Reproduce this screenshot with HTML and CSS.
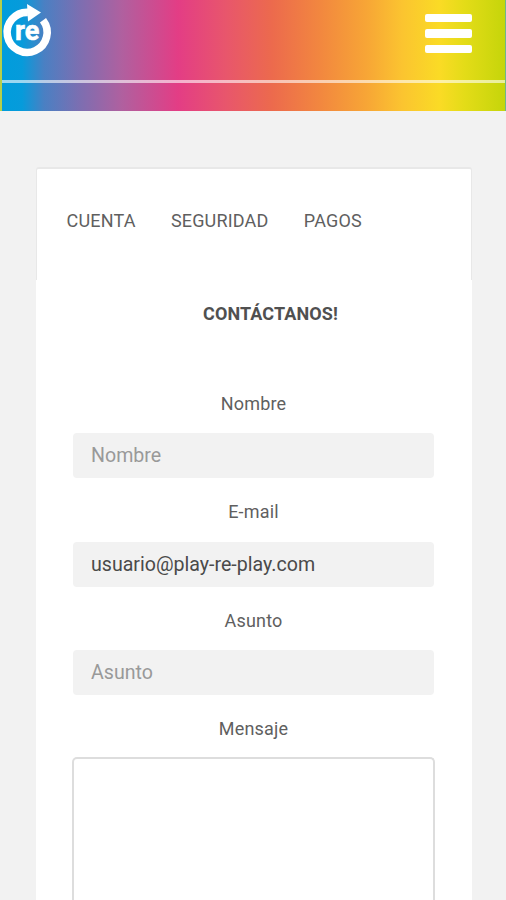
FILE: index.html
```html
<!DOCTYPE html>
<html lang="es">
<head>
    <meta charset="UTF-8">
    <meta name="viewport" content="width=device-width, initial-scale=1.0">
    <title>Contáctanos</title>
    <link rel="stylesheet" href="styles.css">
</head>
<body>
    <header class="header">
        <div class="header-top">
            <svg class="logo" width="54" height="60" viewBox="0 0 54 60">
                <path d="M43 20.2 A20 20 0 1 1 28 12.4" fill="none" stroke="#fff" stroke-width="7.6"/>
                <path d="M27 4 L41 12.5 L28 21.5 Z" fill="#fff"/>
                <text class="logo-text" x="15" y="39.5">re</text>
            </svg>
            <button type="button" class="menu-button" aria-label="Menú">
                <span class="menu-bar"></span>
                <span class="menu-bar"></span>
                <span class="menu-bar"></span>
            </button>
        </div>
    </header>

    <main class="content">
        <nav class="tabs">
            <a class="tab">CUENTA</a>
            <a class="tab">SEGURIDAD</a>
            <a class="tab">PAGOS</a>
        </nav>
        <form class="contact-form">
            <h1 class="title">CONTÁCTANOS!</h1>

            <label class="label" for="nombre">Nombre</label>
            <input class="input" type="text" id="nombre" placeholder="Nombre">

            <label class="label" for="email">E-mail</label>
            <input class="input" type="email" id="email" value="usuario@play-re-play.com">

            <label class="label" for="asunto">Asunto</label>
            <input class="input" type="text" id="asunto" placeholder="Asunto">

            <label class="label" for="mensaje">Mensaje</label>
            <textarea class="message" id="mensaje"></textarea>
        </form>
    </main>
</body>
</html>
```
FILE: styles.css
```css
* { box-sizing: border-box; }
body { margin: 0; height: 900px; overflow: hidden; background-color: #f2f2f2; color: #5f5f5f; font-family: Roboto, sans-serif; font-size: 18px; }

.header {
    height: 111px;
    border-left: 2px solid #b5cf4a;
    border-right: 1px solid #6cb88a;
    background: linear-gradient(to right, #009ddc 0, #069bdb 20px, #4a80c3 42px, #7a6fb2 76px, #b0609f 120px, #e33d85 176px, #e8566c 224px, #ec6a4d 270px, #f2873f 318px, #f7a536 364px, #fbc430 400px, #fadb25 438px, #e4dc18 462px, #c5d50a 503px);
}
.header-top { display: flex; justify-content: space-between; height: 83px; border-bottom: 3px solid rgba(255, 255, 255, 0.6); }
.logo { margin-left: -2px; }
.logo-text { fill: #fff; stroke: #fff; stroke-width: 0.6px; font-size: 27px; font-weight: 700; }
.menu-button { display: flex; flex-direction: column; gap: 7px; width: 47px; margin: 13.5px 33px 0 0; padding: 0; border: none; background: none; }
.menu-bar { width: 47px; height: 8.6px; border-radius: 2px; background-color: #fff; }

.content { width: 436px; margin: 56px 0 0 36px; }
.tabs { display: flex; gap: 35.3px; height: 113px; padding: 41px 30px 0 29.5px; border: 1px solid #e8e8e8; border-top-width: 2px; border-bottom: none; border-radius: 3px 3px 0 0; background-color: #fff; }
.tab { line-height: 22px; letter-spacing: 0.18px; }
.contact-form { display: flex; flex-direction: column; height: 620px; padding: 23px 38px 0 37px; background-color: #fff; }
.title { margin: 0 0 68px 34px; color: #505050; font-size: 18px; line-height: 22px; text-align: center; letter-spacing: 0.1px; }
.label { margin-bottom: 18px; line-height: 22px; text-align: center; letter-spacing: 0.2px; }
.input { flex-shrink: 0; height: 45px; margin: 0.3px 0 23px; padding: 0 17px 0 18px; border: none; border-radius: 4px; background-color: #f2f2f2; color: #4a4a4a; font-family: inherit; font-size: 19.6px; }
.input::placeholder { color: #999; }
.message { flex-shrink: 0; height: 144px; margin: -1px -1px 0; border: 2px solid #ddd; border-bottom: none; border-radius: 5px 5px 0 0; background-color: #fff; resize: none; }
```
